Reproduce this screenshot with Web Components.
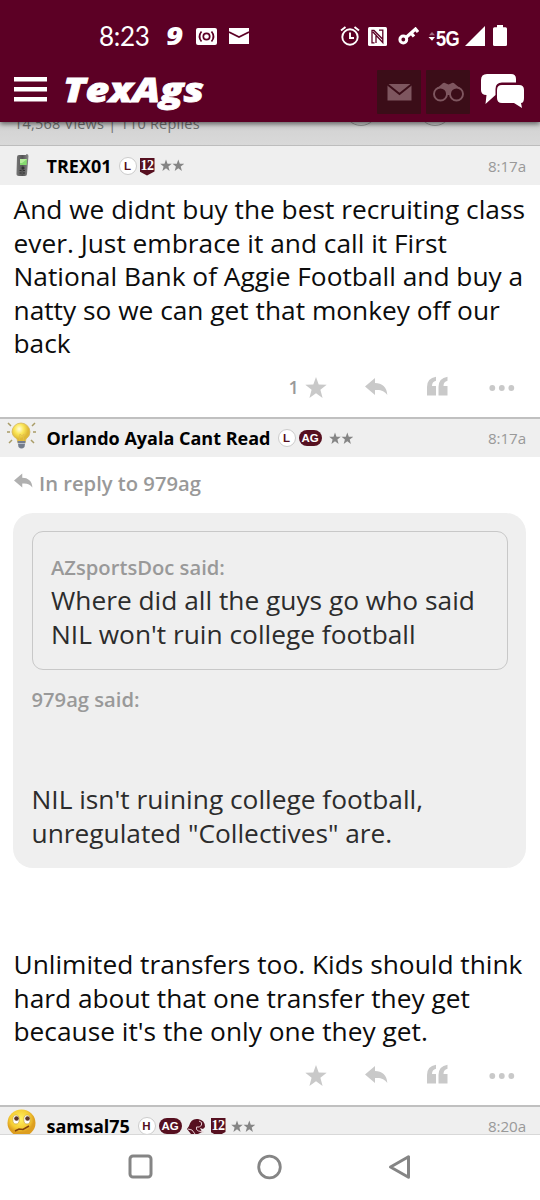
<!DOCTYPE html>
<html lang="en"><head><meta charset="utf-8"><title>TexAgs</title>
<style>html,body{margin:0;background:#fff}body{width:540px;height:1200px;overflow:hidden;font-family:"Open Sans","Noto Sans",sans-serif}</style></head>
<body><forum-page></forum-page>
<script>
const ICONS={
 camera:[21,17,'<path fill="#fff" fill-rule="evenodd" d="M2 0h17a2 2 0 0 1 2 2v13a2 2 0 0 1-2 2H2a2 2 0 0 1-2-2V2a2 2 0 0 1 2-2z"/><g fill="none" stroke="#5c0025" stroke-width="1.7"><circle cx="10.5" cy="8.5" r="3.2"/><path d="M5.5 3.5q-4 5 0 10M15.500 3.500q4 5 0 10"/></g>'],
 mail:[20,16,'<path fill="#fff" d="M0 0h20v16H0z"/><path d="M0 4l10 5 10-5" fill="none" stroke="#5c0025" stroke-width="1.6"/>'],
 alarm:[20,20,'<g fill="none" stroke="#fff" stroke-width="1.9"><circle cx="10" cy="11" r="7.700"/><path d="M10 6.500V12h4M1 4.500L5.500 1M14.500 1L19 4.500"/></g>'],
 nfc:[19,19,'<rect width="19" height="19" rx="1.500" fill="#fff"/><path d="M4 16.500V3.500h2L14.500 12M8 7.500V16M4 15.800h2.500M11 3.200h3.800V15.500L5 5" fill="none" stroke="#5c0025" stroke-width="1.300"/>'],
 key:[21,18,'<g fill="none" stroke="#fff"><circle cx="5.300" cy="12.500" r="3.400" stroke-width="3"/><path d="M8 10.500L17.500 2l2.500 3M13 6l3 3.500" stroke-width="3.200"/></g>'],
 updown:[8,11,'<path d="M1 4.200L4 1l3 3.200z" fill="#a06a83"/><path d="M.5 6h6.500L4 9.800z" fill="#fff"/>'],
 signal:[20,20,'<path d="M20 0v20H0z" fill="#fff"/>'],
 battery:[14,21,'<path d="M4 0h6v2.200h2.500q1.500 0 1.500 1.500v16q0 1.300-1.500 1.300h-11Q0 21 0 19.700v-16q0-1.500 1.500-1.500H4z" fill="#fff"/>'],
 burger:[33,25,'<path d="M0 0h33v4.500H0zM0 10h33v4.500H0zM0 20h33v4.500H0z" fill="#fff"/>'],
 boxmail:[44,44,'<rect width="44" height="44" rx="1" fill="#3b0d18"/><path d="M10.500 14h24v16.500h-24z" fill="#7e565f"/><path d="M10 14l12.500 10L35 14" fill="none" stroke="#3b0d18" stroke-width="2"/>'],
 boxbino:[44,44,'<rect width="44" height="44" rx="1" fill="#3b0d18"/><path d="M9 20l7-6q2-2 4-.5l2.500 1 2.500-1q2-1.500 4 .5l7 6-7 5h-13z" fill="#7e565f"/><g fill="#3b0d18" stroke="#7e565f" stroke-width="1.900"><circle cx="14.500" cy="24" r="6.500"/><circle cx="30.500" cy="24" r="6.500"/></g>'],
 chat:[44,35,'<path d="M6 0h24q5 0 5 5v3.500H21q-6.500 0-6.500 6.500v6l-10 9 1-9Q0 21 0 16V6q0-6 6-6z" fill="#fff"/><path d="M21 11h17q5 0 5 5v8q0 5-3 5l1 5-8-5H21q-5 0-5-5v-8q0-5 5-5z" fill="#fff"/>'],
 star:[22,21,'<path d="M11 0l2.700 7.500 8 .3-6.300 5L17.600 21 11 16.200 4.400 21l2.200-8.200-6.300-5 8-.3z" fill="#c9c9c9"/>'],
 reply:[23,20,'<path d="M10 1v5c7 0 12 4 12.300 12-3-4-6-5.500-12.300-5V18L0 9.500z" fill="#c9c9c9"/>'],
 quote:[22,20,'<path d="M9 .7v4Q5 5.500 5 10h4v9.500H0V11Q0 2 9 .7zM20.500.7v4q-4 .8-4 5.300h4v9.500h-9V11q0-9 9-10.300z" fill="#c9c9c9"/>'],
 dots:[26,6,'<g fill="#c9c9c9"><circle cx="3.300" cy="3" r="2.900"/><circle cx="12.800" cy="3" r="2.900"/><circle cx="22.300" cy="3" r="2.900"/></g>'],
 stars:[24,13,'<path d="M6 .5l1.500 4.200 4.300.1-3.400 2.700 1.200 4.400L6 9.300 2.400 11.900l1.200-4.400L.2 4.800l4.300-.1zM18.300.5l1.500 4.200 4.300.1-3.400 2.700 1.200 4.400-3.600-2.600-3.600 2.600 1.200-4.400-3.400-2.700 4.300-.1z" fill="#858585"/>'],
 helmet:[19,17,'<path d="M2 8Q4 0 11 1q7 1 7 8l-2 2-3-1 2 4-4 2H4L0 11z" fill="#561020"/><path d="M12 3q4 1 2.500 4t-5 2q-1 3 2 4l5 1M1 11l4 1 3 4" fill="none" stroke="#e5ccd2" stroke-width="1"/>'],
 phone:[16,24,'<defs><linearGradient id="a"><stop stop-color="#777"/><stop offset=".5" stop-color="#555"/><stop offset="1" stop-color="#888"/></linearGradient></defs><path d="M11.500 1q2 0 2 2L12 21q0 2-2 2H4q-3 0-2.500-3L2 4q0-2 2-2h7z" fill="url(#a)"/><path d="M5 6h7l-.3 6H5z" fill="#86db70"/><path d="M5 6h7l-5 4H5z" fill="#b5ee9b"/><g fill="#333"><circle cx="8" cy="15" r="1.500"/><path d="M4.500 17h2v1h-2zM8 17h2v1H8zM4.500 19.500h2v1h-2zM8 19.500h2v1H8z"/></g>'],
 bulb:[30,30,'<defs><radialGradient id="b" cx=".4" cy=".3"><stop stop-color="#fffde0"/><stop offset=".5" stop-color="#fbe75a"/><stop offset="1" stop-color="#dfb936"/></radialGradient></defs><path d="M1 2l3 3M28 2l-3 3M0 11h3M26 11h3M2 22l3-3M27 22l-3-3" stroke="#a99c67" stroke-width="1.500"/><path d="M14 2a9 9 0 0 1 9 9q0 4-4 7l-1 4h-7l-1-4q-5-3-5-7a9 9 0 0 1 9-9z" fill="url(#b)" stroke="#d6b75d" stroke-width=".8"/><path d="M12 21l1-8 2 2 2-2-1 8" fill="none" stroke="#e3c04d" stroke-width=".8"/><path d="M10.500 20h8l-1 6q-3 3-6 0z" fill="#747d8c"/><path d="M11 22.500h7" stroke="#b8bfca"/>'],
 face:[30,30,'<defs><radialGradient id="f" cx=".45" cy=".35"><stop stop-color="#fff263"/><stop offset=".7" stop-color="#f5cd34"/><stop offset="1" stop-color="#dd9e20"/></radialGradient></defs><ellipse cx="14.500" cy="14" rx="14" ry="13.500" fill="url(#f)"/><g fill="#fff" stroke="#c7a342" stroke-width=".7"><ellipse cx="9" cy="10.500" rx="3.200" ry="4.500"/><ellipse cx="20" cy="10.500" rx="3.200" ry="4.500"/></g><g fill="#5c3425"><circle cx="9.500" cy="9.500" r="2.300"/><circle cx="20.500" cy="9.500" r="2.300"/></g><path d="M8 22l4-2 4 .5 6-3.500" fill="none" stroke="#81410d" stroke-width="1.500"/>'],
 square:[26,26,'<rect x="2" y="2" width="21" height="21" rx="3" fill="none" stroke="#858585" stroke-width="3"/>'],
 circle:[26,26,'<circle cx="12.500" cy="13" r="10.800" fill="none" stroke="#858585" stroke-width="2.800"/>'],
 back:[24,26,'<path d="M20.500 2.800v20.400L2.500 13z" fill="none" stroke="#858585" stroke-width="3" stroke-linejoin="round"/>']
};
function define(name,css,html){
 customElements.define(name,class extends HTMLElement{
  connectedCallback(){if(this.shadowRoot)return;
   const t=document.createElement('template');
   t.innerHTML='<style>:host{display:block;box-sizing:border-box}'+css+'</style>'+(typeof html==='function'?html(this):html);
   this.attachShadow({mode:'open'}).append(t.content.cloneNode(true));}
 });
}
define('ui-icon',':host{flex:none;line-height:0}svg{display:block}',e=>{const [w,h,b]=ICONS[e.getAttribute('name')];return `<svg width="${w}" height="${h}" viewBox="0 0 ${w} ${h}">${b}</svg>`;});
define('status-bar',`:host{height:70px;display:flex;align-items:flex-start;color:#fff}
 .time{font:400 26px/30px Lato,sans-serif;margin:21px 0 0 99px;width:67px;letter-spacing:-.3px}
 .nine{font:italic 800 25px/30px "Open Sans",sans-serif;margin-top:20px;width:30px}
 .nine span{display:inline-block;transform:scaleX(1.18);transform-origin:left}
 .net{font:700 22px/26px "Liberation Sans",sans-serif;margin-top:26px;width:25px;letter-spacing:-.8px;white-space:nowrap}
 .net span{display:inline-block;transform:scaleX(.83);transform-origin:left}`,
 `<span class="time">8:23</span><span class="nine"><span>9</span></span><ui-icon name="camera" style="margin-top:28px"></ui-icon><ui-icon name="mail" style="margin:28px 0 0 12px"></ui-icon><ui-icon name="alarm" style="margin:26px 0 0 91px"></ui-icon><ui-icon name="nfc" style="margin:27px 0 0 8px"></ui-icon><ui-icon name="key" style="margin:27px 0 0 11px"></ui-icon><ui-icon name="updown" style="margin:31px 0 0 9px"></ui-icon><span class="net"><span>5G</span></span><ui-icon name="signal" style="margin:26px 0 0 4px"></ui-icon><ui-icon name="battery" style="margin:25px 0 0 8px"></ui-icon>`);
define('app-bar',`:host{height:52px;display:flex;align-items:flex-start;padding-left:14px}
 svg{display:block;margin:0 0 0 17px;flex:none;overflow:visible}`,
 `<ui-icon name="burger" style="margin-top:7px"></ui-icon><svg width="142" height="42"><text x="-1" y="32" textLength="141" lengthAdjust="spacingAndGlyphs" fill="#fff" stroke="#fff" stroke-width=".8" font-family="Open Sans" font-style="italic" font-weight="800" font-size="33">TexAgs</text></svg><ui-icon name="boxmail" style="margin-left:170.500px"></ui-icon><ui-icon name="boxbino" style="margin-left:5.500px"></ui-icon><ui-icon name="chat" style="margin:4px 0 0 11px"></ui-icon>`);
define('top-chrome',':host{background:#5c0025;height:122px;position:relative;z-index:1;box-shadow:0 2px 5px rgba(0,0,0,.55)}','<status-bar></status-bar><app-bar></app-bar>');
define('thread-info',`:host{height:23px;background:linear-gradient(#d2d2d2,#d9d9d9);overflow:hidden;display:flex}
 p{margin:-8px 0 0 14px;width:330px;height:20px;font-size:14.500px;line-height:20px;color:#707070;white-space:nowrap;letter-spacing:.22px}
 i{flex:none;width:32px;height:32px;border:1px solid #999;border-radius:50%;margin-top:-30px;margin-right:40px}`,
 '<p>14,568 Views | 110 Replies</p><i></i><i></i>');
define('user-badge',`:host{flex:none;height:18px;display:flex;align-items:center;justify-content:center;font:700 11.5px/18px "Liberation Sans",sans-serif;color:#561020}
 :host([kind=round]){width:18px;border:1px solid #ccc;border-radius:50%;background:#fff}
 :host([kind=pill]){width:23px;height:16px;border-radius:8px;background:#561020;color:#fff}
 :host([kind=shield]){width:15px;height:18px;background:#561020;clip-path:polygon(0 0,100% 0,100% 78%,50% 100%,0 78%);color:#fff;font:700 14px/16px "Liberation Serif",serif;letter-spacing:-.5px}
 :host([kind=shield]) slot{display:block;margin-top:-2px}`,'<slot></slot>');
define('post-header',`:host{height:40px;border-top:2px solid #c0c0c0;background:#efefef;display:flex;align-items:center;overflow:hidden}
 :host([thin]){border-top:1px solid #bdbdbd}
 .av{width:46.500px;flex:none;display:flex}
 .name{font-weight:700;font-size:18px;line-height:24px;color:#000;white-space:nowrap;flex:none}
 .b{display:flex;align-items:center;flex:1}
 .t{font-size:15.200px;line-height:20px;color:#999;margin-right:14px;letter-spacing:-.1px}`,
 e=>`<div class="av"><ui-icon name="${e.getAttribute('avatar')}" style="margin-left:${e.getAttribute('ax')}px;margin-top:${e.getAttribute('ay')}px"></ui-icon></div><span class="name" style="width:${e.getAttribute('nw')}px">${e.getAttribute('name')}</span><div class="b"><slot></slot></div><span class="t">${e.getAttribute('time')}</span>`);
define('text-block',`:host{font-size:26.300px;line-height:33.500px;white-space:nowrap}`,'<slot></slot>');
define('text-line','','<slot></slot>');
define('post-actions',`:host{height:21px;display:flex;align-items:center;padding-left:288.500px}
 b{font:600 18px/20px "Open Sans",sans-serif;color:#999;width:16px;flex:none;margin-top:-2px}`,
 e=>`<b>${e.getAttribute('count')||''}</b><ui-icon name="star" style="margin-top:-1px"></ui-icon><ui-icon name="reply" style="margin-left:38px;margin-top:-1px"></ui-icon><ui-icon name="quote" style="margin-left:39px;margin-top:-3px"></ui-icon><ui-icon name="dots" style="margin-left:40px"></ui-icon>`);
define('reply-note',`:host{display:flex;height:26px;padding-left:14px;color:#999;font:600 20.200px/26px "Open Sans",sans-serif;white-space:nowrap}svg{margin:2px 6px 0 0}`,
 '<svg width="19" height="18" viewBox="0 0 23 20"><path d="M10 1v5c7 0 12 4 12.300 12-3-4-6-5.500-12.300-5V18L0 9.500z" fill="#b0b0b0"/></svg><slot></slot>');
define('quote-by',':host{font-weight:600;font-size:20.200px;line-height:24px;height:26px;color:#999;white-space:nowrap}','<slot></slot>');
define('quote-box',`:host{margin:0 14px 0 13px;height:355px;border-radius:20px;background:#efefef;padding:18px 18px 0 18.500px}`,'<slot></slot>');
define('inner-quote',`:host{height:139px;border:1px solid #c8c8c8;border-radius:11px;padding:23px 0 0 18.500px}`,'<slot></slot>');
define('nav-bar',`:host{height:66px;background:#fff;border-top:1px solid #d8d8d8;display:flex;align-items:center;padding-bottom:1px}`,
 '<ui-icon name="square" style="margin-left:128px"></ui-icon><ui-icon name="circle" style="margin-left:103px"></ui-icon><ui-icon name="back" style="margin-left:105px"></ui-icon>');
define('forum-page',`:host{width:540px;height:1200px;overflow:hidden;background:#fff}
 .p{padding-left:13.500px;box-sizing:border-box}.clip{height:29px;overflow:hidden}`,
`<top-chrome></top-chrome><thread-info></thread-info>
<post-header thin avatar="phone" ax="15" ay="-1" name="TREX01" nw="72" time="8:17a"><user-badge kind="round">L</user-badge><user-badge kind="shield" style="margin:2px 5px 0 3px">12</user-badge><ui-icon name="stars"></ui-icon></post-header>
<div class="p" style="height:192px;padding-top:8px"><text-block style="color:#0c0c0c"><text-line>And we didnt buy the best recruiting class</text-line><text-line>ever. Just embrace it and call it First</text-line><text-line>National Bank of Aggie Football and buy a</text-line><text-line>natty so we can get that monkey off our</text-line><text-line>back</text-line></text-block></div>
<post-actions count="1"></post-actions>
<post-header style="margin-top:19px" avatar="bulb" ax="7" ay="-5" name="Orlando Ayala Cant Read" nw="231" time="8:17a"><user-badge kind="round">L</user-badge><user-badge kind="pill" style="margin:0 7px 0 3px">AG</user-badge><ui-icon name="stars"></ui-icon></post-header>
<reply-note style="margin-top:13px">In reply to 979ag</reply-note>
<quote-box style="margin-top:17px"><inner-quote><quote-by>AZsportsDoc said:</quote-by><text-block style="margin-top:3px;color:#2c2c2c"><text-line>Where did all the guys go who said</text-line><text-line>NIL won't ruin college football</text-line></text-block></inner-quote>
<quote-by style="margin-top:17px">979ag said:</quote-by><text-block style="margin-top:70px;color:#2c2c2c"><text-line>NIL isn't ruining college football,</text-line><text-line>unregulated "Collectives" are.</text-line></text-block></quote-box>
<div class="p" style="height:197px;padding-top:80px"><text-block style="color:#0c0c0c"><text-line>Unlimited transfers too. Kids should think</text-line><text-line>hard about that one transfer they get</text-line><text-line>because it's the only one they get.</text-line></text-block></div>
<post-actions></post-actions>
<div class="clip" style="margin-top:19px"><post-header avatar="face" ax="7" ay="-5" name="samsal75" nw="91" time="8:20a"><user-badge kind="round">H</user-badge><user-badge kind="pill" style="margin:0 5px 0 3px">AG</user-badge><ui-icon name="helmet"></ui-icon><user-badge kind="shield" style="margin:2px 5px 0 5px">12</user-badge><ui-icon name="stars"></ui-icon></post-header></div>
<nav-bar></nav-bar>`);
</script></body></html>
